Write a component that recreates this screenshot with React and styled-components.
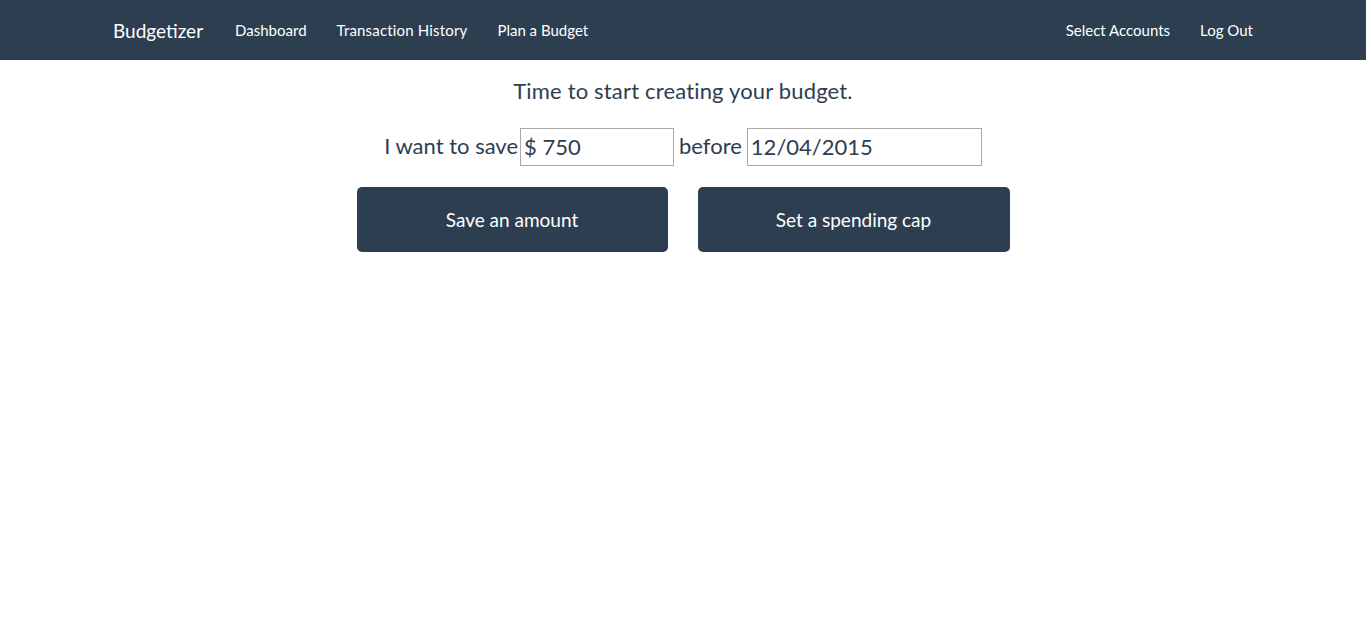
import React from 'react';
import styled, { createGlobalStyle } from 'styled-components';

const GlobalStyle = createGlobalStyle`
  body {
    margin: 0;
    font-family: Lato, "Open Sans", sans-serif;
    color: #2c3e50;
    background: #fff;
  }
`;

const Navbar = styled.nav`
  background: #2c3e50;
  height: 60px;
`;

const NavContainer = styled.div`
  width: 1170px;
  margin: 0 auto;
  padding: 0 15px;
  box-sizing: border-box;
  display: flex;
  align-items: center;
  height: 100%;
`;

const Brand = styled.a`
  color: #fff;
  font-size: 19px;
  padding: 0 17px 0 0;
  cursor: pointer;
`;

const NavList = styled.ul`
  list-style: none;
  margin: 0;
  padding: 0;
  display: flex;
  margin-left: ${p => (p.right ? 'auto' : '0')};
`;

const NavItem = styled.li`
  color: #fff;
  font-size: 15px;
  letter-spacing: ${p => p.spacing || 0}px;
  padding: 0 15px;
  cursor: pointer;
  &:last-child {
    padding-right: ${p => (p.last ? '0' : '15px')};
  }
`;

const Main = styled.main`
  text-align: center;
  padding-top: 16px;
`;

const Heading = styled.p`
  font-size: 22px;
  letter-spacing: 0.17px;
  margin: 0 0 22px;
  line-height: 30px;
`;

const SaveRow = styled.div`
  display: flex;
  justify-content: center;
  align-items: center;
  font-size: 22px;
  line-height: 36px;
`;

const Label = styled.span`
  margin: ${p => p.m || '0'};
  padding-bottom: 2px;
`;

const Field = styled.input`
  width: ${p => p.w}px;
  height: 38px;
  box-sizing: border-box;
  border: 1px solid #aaa;
  font-family: Lato, "Open Sans", sans-serif;
  font-size: 22px;
  color: #2c3e50;
  padding: 0 3px 2px;
  outline: none;
  margin: 0;
`;

const ButtonRow = styled.div`
  display: flex;
  justify-content: center;
  gap: 30px;
  margin-top: 21px;
`;

const BigButton = styled.button`
  width: ${p => p.w}px;
  height: 65px;
  background: #2c3e50;
  color: #fff;
  border: none;
  border-radius: 5px;
  font-family: Lato, "Open Sans", sans-serif;
  font-size: 19px;
  cursor: pointer;
`;

export default function App() {
  return (
    <>
      <GlobalStyle />
      <Navbar>
        <NavContainer>
          <Brand>Budgetizer</Brand>
          <NavList>
            <NavItem>Dashboard</NavItem>
            <NavItem spacing={0.17}>Transaction History</NavItem>
            <NavItem>Plan a Budget</NavItem>
          </NavList>
          <NavList right>
            <NavItem>Select Accounts</NavItem>
            <NavItem last>Log Out</NavItem>
          </NavList>
        </NavContainer>
      </Navbar>
      <Main>
        <Heading>Time to start creating your budget.</Heading>
        <SaveRow>
          <Label m="0 2px 0 0">I want to save</Label>
          <Field w={154} defaultValue="$ 750" />
          <Label m="0 5px 0 5px">before</Label>
          <Field w={235} defaultValue="12/04/2015" />
        </SaveRow>
        <ButtonRow>
          <BigButton w={311}>Save an amount</BigButton>
          <BigButton w={312}>Set a spending cap</BigButton>
        </ButtonRow>
      </Main>
    </>
  );
}
